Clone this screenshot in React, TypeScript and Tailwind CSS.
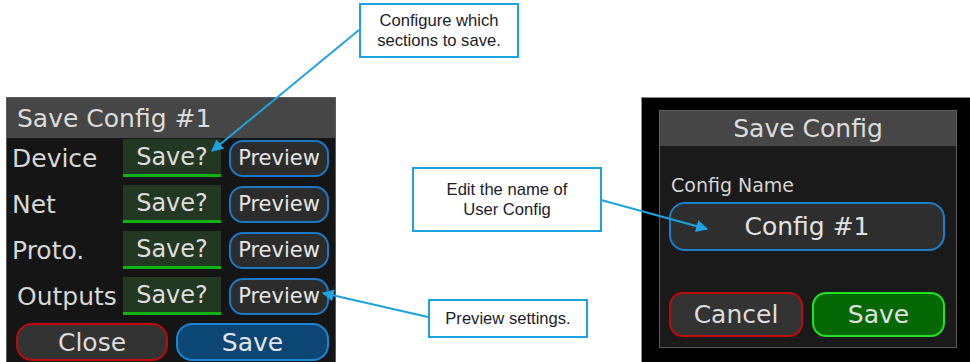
import React from 'react';

const ui = { fontFamily: '"DejaVu Sans", Verdana, sans-serif' };
const note = { fontFamily: '"Liberation Sans", Arial, sans-serif' };

const sections = ['Device', 'Net', 'Proto.', 'Outputs'];

const SectionRow = ({ label }: { label: string }) => (
  <div className="flex h-[38px] items-center">
    <div
      className={`w-[111px] text-[25px] leading-none text-[#d6d6d6] ${
        label === 'Outputs' ? 'pl-[5px]' : ''
      }`}
    >
      {label}
    </div>
    <div className="flex h-[38px] w-[98px] flex-col bg-[#233822]">
      <div className="flex flex-1 items-center justify-center text-[24px] leading-none text-[#dcdcdc]">
        Save?
      </div>
      <div className="h-[3px] bg-[#0fb30f]" />
    </div>
    <div className="ml-[8px] flex h-[37px] w-[100px] items-center justify-center rounded-[14px] border-2 border-[#1b78c6] bg-[#2c2c2c] text-[21px] leading-none text-[#e6e6e6]">
      Preview
    </div>
  </div>
);

const Callout = ({
  className,
  lines,
}: {
  className: string;
  lines: string[];
}) => (
  <div
    className={`absolute flex flex-col items-center justify-center border-2 border-[#1ea3e2] bg-white text-[16.6px] leading-[20px] text-[#1c1c2a] ${className}`}
    style={note}
  >
    {lines.map((l) => (
      <span key={l}>{l}</span>
    ))}
  </div>
);

export default function App() {
  return (
    <div className="relative h-[362px] w-[970px] overflow-hidden bg-white">
      <div className="flex pt-[97px]" style={ui}>
        {/* device screen: section picker */}
        <div className="ml-[6px] flex h-[280px] w-[330px] flex-col border border-[#5a5a5a] bg-[#151515]">
          <div className="flex h-[40px] items-center bg-[#464646] pl-[10px] text-[25px] leading-none text-[#dcdcdc]">
            Save Config #1
          </div>
          <div className="flex flex-col gap-[8px] pl-[5px] pt-[1px]">
            {sections.map((s) => (
              <SectionRow key={s} label={s} />
            ))}
          </div>
          <div className="mt-[8px] flex gap-[8px] pl-[9px]">
            <div className="flex h-[38px] w-[152px] items-center justify-center rounded-[16px] border-2 border-[#c00a0a] bg-[#333333] text-[25px] leading-none text-[#dcdcdc]">
              Close
            </div>
            <div className="flex h-[38px] w-[153px] items-center justify-center rounded-[16px] border-2 border-[#1a86d4] bg-[#0c4675] text-[25px] leading-none text-[#e4e4e4]">
              Save
            </div>
          </div>
        </div>

        {/* device screen: name dialog */}
        <div className="ml-auto h-[270px] w-[329px] border-l border-t border-[#8a8a8a] bg-black pl-[17px] pt-[12px]">
          <div className="flex h-[238px] w-[298px] flex-col border border-[#5a5a5a] bg-[#1a1a1a]">
            <div className="flex h-[35px] items-center justify-center bg-[#464646] text-[25px] leading-none text-[#dcdcdc]">
              Save Config
            </div>
            <div className="flex flex-col px-[9px]">
              <div className="pl-[2px] pt-[30px] text-[19px] leading-none text-[#d4d4d4]">
                Config Name
              </div>
              <div className="mt-[7px] flex h-[49px] w-[276px] items-center justify-center rounded-[16px] border-2 border-[#1a80ce] bg-[#2e2e2e] text-[25px] leading-none text-[#e2e2e2]">
                Config #1
              </div>
              <div className="mt-[41px] flex gap-[9px]">
                <div className="flex h-[45px] w-[134px] items-center justify-center rounded-[14px] border-2 border-[#bd0a0a] bg-[#333333] text-[25px] leading-none text-[#dcdcdc]">
                  Cancel
                </div>
                <div className="flex h-[45px] w-[133px] items-center justify-center rounded-[14px] border-2 border-[#22e022] bg-[#046904] text-[25px] leading-none text-[#e0e0e0]">
                  Save
                </div>
              </div>
            </div>
          </div>
        </div>
      </div>

      {/* annotations */}
      <svg
        className="pointer-events-none absolute inset-0"
        width="970"
        height="362"
        viewBox="0 0 970 362"
      >
        <defs>
          <marker
            id="head"
            viewBox="0 0 10 10"
            refX="9"
            refY="5"
            markerWidth="6"
            markerHeight="6"
            orient="auto-start-reverse"
          >
            <path d="M0 0 L10 5 L0 10 Z" fill="#1ea3e2" />
          </marker>
        </defs>
        <line x1="359" y1="30" x2="212" y2="151" stroke="#1ea3e2" strokeWidth="2" markerEnd="url(#head)" />
        <line x1="601" y1="200" x2="707" y2="229" stroke="#1ea3e2" strokeWidth="2" markerEnd="url(#head)" />
        <line x1="428" y1="317" x2="323" y2="293" stroke="#1ea3e2" strokeWidth="2" markerEnd="url(#head)" />
      </svg>
      <Callout
        className="left-[359px] top-[3px] h-[55px] w-[160px]"
        lines={['Configure which', 'sections to save.']}
      />
      <Callout
        className="left-[412px] top-[167px] h-[65px] w-[190px]"
        lines={['Edit the name of', 'User Config']}
      />
      <Callout
        className="left-[428px] top-[299px] h-[39px] w-[160px]"
        lines={['Preview settings.']}
      />
    </div>
  );
}
